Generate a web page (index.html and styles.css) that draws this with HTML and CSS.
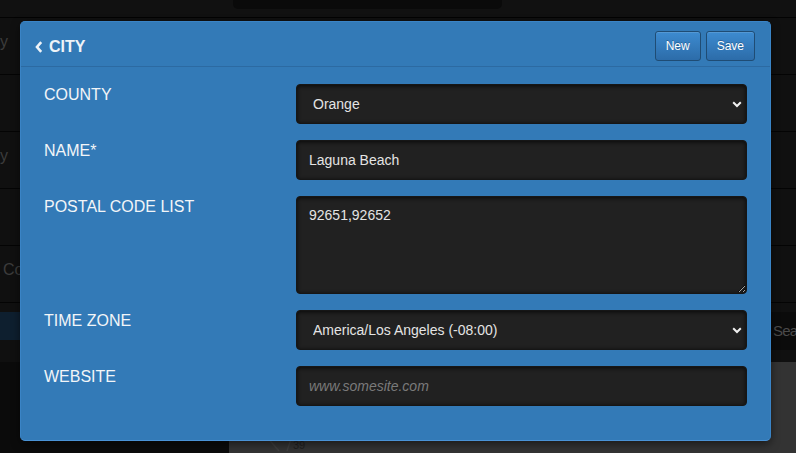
FILE: index.html
```html
<!DOCTYPE html>
<html lang="en">
<head>
<meta charset="utf-8">
<title>City</title>
<link rel="stylesheet" href="styles.css">
</head>
<body>
<div class="page">
  <header class="topbar"><div class="topbox"></div></header>
  <div class="list">
    <div class="list-row"><span class="row-text">y</span></div>
    <div class="list-row"><span class="row-text"></span></div>
    <div class="list-row"><span class="row-text">y</span></div>
    <div class="list-row"><span class="row-text"></span></div>
    <div class="list-row"><span class="row-text row-text-start">Co</span></div>
  </div>
  <div class="toolbar">
    <div class="tool-left"></div>
    <div class="tool-mid"></div>
    <div class="search">Sea</div>
  </div>
  <div class="lower">
    <div class="lower-left"></div>
    <div class="map">
      <svg class="map-lines" width="120" height="40" viewBox="0 0 120 40">
        <path d="M14 0 L40 30" stroke="#3e3e3e" stroke-width="1.5" fill="none"/>
        <path d="M58 0 L48 30" stroke="#3e3e3e" stroke-width="1.5" fill="none"/>
      </svg>
      <span class="map-label">39</span>
    </div>
  </div>
</div>

<div class="modal">
  <div class="modal-header">
    <div class="modal-title">
      <svg class="back" width="8" height="12" viewBox="0 0 8 12"><path d="M6.2 1.2 L2 6 L6.2 10.8" stroke="#eef3f8" stroke-width="2.6" fill="none"/></svg>
      <span>CITY</span>
    </div>
    <div class="actions">
      <button class="btn">New</button>
      <button class="btn">Save</button>
    </div>
  </div>
  <form class="modal-body">
    <label class="field-label">COUNTY</label>
    <div class="select-wrap">
      <select class="control select"><option>Orange</option></select>
      <svg class="caret" width="10" height="7" viewBox="0 0 10 7"><path d="M1.2 1.3 L5 5 L8.8 1.3" stroke="#f0f0f0" stroke-width="2" fill="none"/></svg>
    </div>

    <label class="field-label">NAME*</label>
    <input class="control" type="text" value="Laguna Beach">

    <label class="field-label">POSTAL CODE LIST</label>
    <textarea class="control textarea">92651,92652</textarea>

    <label class="field-label">TIME ZONE</label>
    <div class="select-wrap">
      <select class="control select"><option>America/Los Angeles (-08:00)</option></select>
      <svg class="caret" width="10" height="7" viewBox="0 0 10 7"><path d="M1.2 1.3 L5 5 L8.8 1.3" stroke="#f0f0f0" stroke-width="2" fill="none"/></svg>
    </div>

    <label class="field-label">WEBSITE</label>
    <input class="control" type="text" placeholder="www.somesite.com">
  </form>
</div>
</body>
</html>
```
FILE: styles.css
```css
* { box-sizing: border-box; }

html, body {
  margin: 0;
  padding: 0;
  height: 100%;
  overflow: hidden;
}

body {
  background: #101010;
  font-family: "Liberation Sans", Arial, sans-serif;
  color: #f0f0f0;
}

.page {
  display: flex;
  flex-direction: column;
  height: 100%;
}

.topbar {
  height: 18px;
  border-bottom: 1px solid #030303;
  background: #111;
}

.topbox {
  margin-left: 233px;
  width: 269px;
  height: 9px;
  background: #0a0a0a;
  border-radius: 0 0 5px 5px;
}

.list-row {
  height: 57px;
  border-bottom: 1px solid #040404;
  padding-top: 13px;
  font-size: 16px;
  line-height: 22px;
  color: #3c3c3c;
  white-space: nowrap;
}

.row-text {
  display: block;
  padding-left: 0;
}

.row-text-start { padding-left: 3px; }

.toolbar {
  display: flex;
  align-items: flex-start;
  height: 59px;
  padding-top: 9px;
}

.tool-left {
  width: 229px;
  height: 28px;
  background: #0e1f2f;
}

.tool-mid { flex: 1; }

.search {
  width: 26px;
  height: 38px;
  background: #0b0b0b;
  padding-left: 3px;
  font-size: 15px;
  line-height: 38px;
  color: #4a4a4a;
  white-space: nowrap;
  letter-spacing: -0.8px;
}

.lower {
  flex: 1;
  display: flex;
}

.lower-left {
  width: 229px;
  background: #0b0b0b;
}

.map {
  flex: 1;
  background: #333;
  display: flex;
  align-items: flex-end;
}

.map-lines {
  display: block;
  margin-left: 10px;
  margin-bottom: -8px;
}

.map-label {
  font-size: 11px;
  line-height: 12px;
  color: #1f1f1f;
  margin-left: -66px;
  margin-bottom: 2px;
}

/* Modal */
.modal {
  position: absolute;
  left: 20px;
  top: 21px;
  width: 751px;
  background: #337ab7;
  border: 1px solid #3a84c6;
  border-bottom-color: #4a93d6;
  border-radius: 5px;
  box-shadow: 0 3px 9px rgba(0, 0, 0, 0.5);
}

.modal-header {
  display: flex;
  align-items: center;
  justify-content: space-between;
  padding: 9px 15px 5px 14px;
  border-bottom: 1px solid #2c6aa2;
}

.modal-title {
  display: flex;
  align-items: center;
  gap: 6px;
  font-size: 16px;
  font-weight: bold;
  color: #eef3f8;
  line-height: 20px;
  padding-top: 1px;
}

.back { display: block; }

.actions {
  display: flex;
  gap: 5px;
}

.btn {
  height: 30px;
  padding: 0 10px;
  font-family: "Liberation Sans", Arial, sans-serif;
  font-size: 12px;
  line-height: 28px;
  color: #fff;
  text-shadow: 0 -1px 0 rgba(0, 0, 0, 0.25);
  background: linear-gradient(to bottom, #3d8bd0 0%, #2c6ca9 100%);
  border: 1px solid #1f4c74;
  border-radius: 3px;
  box-shadow: inset 0 1px 0 rgba(255, 255, 255, 0.12);
}

.modal-body {
  display: grid;
  grid-template-columns: 252px 451px;
  row-gap: 16px;
  padding: 17px 23px 34px 23px;
  margin: 0;
}

.field-label {
  font-size: 16px;
  line-height: 1.42857;
  color: #f2f5f8;
}

.control {
  display: block;
  width: 100%;
  height: 40px;
  margin: 0;
  padding: 0 12px;
  font-family: "Liberation Sans", Arial, sans-serif;
  font-size: 14px;
  color: #e4e4e4;
  background: #212121;
  border: 1px solid #161616;
  border-radius: 4px;
  box-shadow: inset 0 1px 4px rgba(0, 0, 0, 0.75);
  outline: none;
}

.control::placeholder {
  color: #7a7a7a;
  font-style: italic;
}

.textarea {
  height: 98px;
  padding: 8px 12px;
  line-height: 20px;
  resize: vertical;
}

.select-wrap {
  position: relative;
}

.select {
  appearance: none;
  -webkit-appearance: none;
  padding-left: 16px;
}

.caret {
  position: absolute;
  right: 5px;
  top: 17px;
  pointer-events: none;
}
```
